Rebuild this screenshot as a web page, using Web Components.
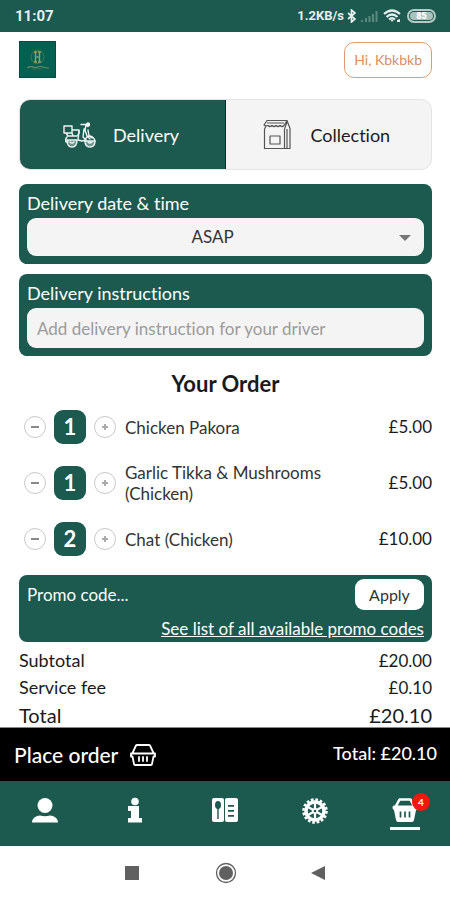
<!DOCTYPE html>
<html lang="en">
<head>
<meta charset="utf-8">
<meta name="viewport" content="width=device-width, initial-scale=1">
<title>Your Order</title>
<style>
  html, body { margin: 0; height: 100%; }
  body {
    --green: #1c594f;
    --panel: #f4f4f4;
    font: 17px/20px Lato, "Liberation Sans", sans-serif;
    font-variant-ligatures: none;
    color: #1a1a1a;
    background: #fff;
  }
</style>
</head>
<body>
<order-screen></order-screen>
<script>
const define = (name, html, setup) => {
  const tpl = document.createElement('template');
  tpl.innerHTML = '<style>*{box-sizing:border-box}button,input,select{font:inherit;font-variant-ligatures:none;color:inherit;margin:0;border:0;padding:0;background:none}svg{display:block}</style>' + html;
  customElements.define(name, class extends HTMLElement {
    constructor() {
      super();
      this.attachShadow({ mode: 'open' }).append(tpl.content.cloneNode(true));
    }
    connectedCallback() { if (setup) setup(this, this.shadowRoot); }
  });
};

define('status-bar', `
<style>
  :host { display: flex; align-items: center; justify-content: space-between; height: 32px; flex: none;
    padding: 0 14px 0 15px; background: var(--green); color: #e6f0ed; font-family: Roboto, sans-serif; font-weight: 700; font-size: 15px; }
  .right { display: flex; align-items: center; gap: 5px; font-size: 13px; }
  .speed { margin-right: -2px; }
  .bat { border: 2px solid #b5cbc6; border-radius: 8px; width: 29px; height: 14px; display: grid; place-items: center; padding: 1px; }
  .bat b { background: #a9c2bc; color: #fff; border-radius: 4px; font-size: 9px; line-height: 8px; width: 100%; text-align: center; }
</style>
<span>11:07</span>
<div class="right">
  <span class="speed">1.2KB/s</span>
  <svg width="9" height="14" viewBox="0 0 9 14" fill="none" stroke="#e6f0ed" stroke-width="1.700"><path d="M1 4l7 6-3.500 3V1L8 4 1 10"/></svg>
  <svg width="17" height="13" viewBox="0 0 17 13" fill="#5b877f"><path d="M0 10h2v2H0zM4 8h2v4H4zM7.500 6h2v6h-2zM11 4h2v8h-2zM14.500 1h2v11h-2z"/></svg>
  <svg width="19" height="14" viewBox="0 0 19 14" fill="none" stroke="#e6f0ed" stroke-width="2.200"><path d="M1 5Q9 -2 17 5M3.500 8Q9 3 14.500 8M6 10.500Q9 8 12 10.500"/><path d="M7.500 11h3L9 13zM14 11l3-1v3h-3z" fill="#e6f0ed" stroke="none"/></svg>
  <div class="bat"><b>85</b></div>
</div>`);

define('top-header', `
<style>
  :host { display: flex; align-items: center; justify-content: space-between; padding-top: 9px; }
  button { height: 36px; padding: 0 9px; border: 1px solid #dd9d6c; border-radius: 10px; color: #d98f58; font-size: 14px; }
</style>
<svg width="37" height="37" viewBox="0 0 37 37" role="img" aria-label="Restaurant logo">
  <rect width="37" height="37" fill="#0b4a40"/><rect x="1" y="1" width="35" height="35" fill="#046050"/>
  <g fill="none" stroke="#a39a67"><circle cx="18.500" cy="16" r="6.500" stroke-width=".6" opacity=".7"/><path d="M16.500 11v10M15 11h3M15 21h3M20.500 11v10M19 11h3M19 21h3M17.500 16h2" stroke-width="1.400"/><path d="M8 27q4-2 6-1t5 0 5 0 6 1" stroke-width="1.200" opacity=".7"/><path d="M13 28h11" stroke-width=".6" opacity=".5"/></g>
</svg>
<button type="button">Hi, Kbkbkb</button>`);

define('mode-switch', `
<style>
  :host { display: grid; grid-template-columns: 1fr 1fr; height: 71px; border-radius: 11px; overflow: hidden; border: 1px solid #e4e4e4; background: var(--panel); }
  button { display: flex; align-items: center; font-size: 18px; padding-left: 43px; gap: 17px; cursor: pointer; }
  button.on { background: var(--green); color: #fff; border-right: 1px solid #0c2a25; }
  button:not(.on) { padding-left: 37px; gap: 20px; }
</style>
<button type="button" class="on" aria-pressed="true">
  <svg width="33" height="26" viewBox="0 0 33 26" fill="none" stroke="#eef5f3" stroke-width="1.400" stroke-linejoin="round" stroke-linecap="round">
    <path d="M1 4h8v7H1zM9 8h7v3l-1 2M3 11l2 3h9M9 11l1 3M4 15q-2 2-1 5h2"/>
    <path d="M18 2.500h5l2 2M23 3l-1 5 2 6 3 3M25 8l1 6 3 2M16 9l-1 9 4 1 4-1-3-3 1-8"/>
    <path d="M22 19q1-5 5-5 4 1 5 5"/><circle cx="25" cy="2.500" r="1.500" fill="#fff"/>
    <path d="M4 18h10q0 7-5 7t-5-7zM22 19h10q0 6-5 6t-5-6z" fill="#fff" fill-opacity=".35"/>
    <path d="M7 20q2 2 4 0M25 20q2 2 4 0"/>
  </svg>Delivery
</button>
<button type="button" aria-pressed="false">
  <svg width="28" height="31" viewBox="0 0 28 31" fill="none" stroke="#555" stroke-width="1.200" stroke-linejoin="round">
    <path d="M4 1.500h20l-3 5q-2 2-4 0-2 2-4 0-2 2-4 0-2 2-4 0-2 1-4-.5zM1.500 10v19.500h20V10M3 7l-1.500 3M24 1.500l3 8v20h-5.500M21.500 10L24 3M24 10v19M4 4h17"/>
    <path d="M7 17h10v8H7z"/>
  </svg>Collection
</button>`);

define('field-card', `
<style>
  :host { display: block; background: var(--green); border-radius: 8px; padding: 8px; color: #fff; }
  label { display: block; font-size: 18px; line-height: 22px; margin-bottom: 4px; }
  .box { position: relative; }
  select, input { display: block; width: 100%; height: 38px; border-radius: 9px; background: var(--panel); }
  select { appearance: none; text-align-last: center; color: #333; padding-right: 26px; }
  input { height: 40px; padding: 0 10px; }
  input::placeholder { color: #9b9b9b; opacity: 1; }
  svg { position: absolute; right: 13px; top: 17px; pointer-events: none; }
</style>
<label for="f"></label><div class="box"></div>`, (el, root) => {
  root.querySelector('label').textContent = el.getAttribute('label');
  const hint = el.getAttribute('placeholder');
  root.querySelector('.box').innerHTML = hint
    ? '<input id="f" type="text">'
    : '<select id="f"><option>' + el.getAttribute('value') + '</option></select><svg width="12" height="6" viewBox="0 0 12 6" fill="#777"><path d="M0 0h12L6 6z"/></svg>';
  if (hint) root.getElementById('f').placeholder = hint;
});

define('order-row', `
<style>
  :host { display: grid; grid-template-columns: 22px 32px 22px 1fr auto; align-items: center; column-gap: 8px; min-height: 56px; padding-left: 5px; }
  button { width: 22px; height: 22px; border: 1px solid #c9c9c9; border-radius: 50%; display: grid; place-items: center; }
  output { height: 34px; border-radius: 9px; background: var(--green); color: #fff; font-size: 22px; line-height: 34px; text-align: center; font-weight: 700; }
  .name { padding: 0 30px 0 1px; line-height: 21px; color: #333; }
</style>
<button type="button" aria-label="Remove one"><svg width="8" height="8"><path d="M0 4h8" stroke="#888" stroke-width="2"/></svg></button>
<output></output>
<button type="button" aria-label="Add one"><svg width="8" height="8"><path d="M1 4h6M4 1v6" stroke="#aaa" stroke-width="2"/></svg></button>
<span class="name"><slot></slot></span><span class="price"></span>`, (el, root) => {
  root.querySelector('output').textContent = el.getAttribute('qty');
  root.querySelector('.price').textContent = el.getAttribute('price');
});

define('promo-card', `
<style>
  :host { display: block; background: var(--green); border-radius: 8px; padding: 4px 8px 3px; color: #fff; }
  .top { display: flex; align-items: center; gap: 8px; margin-bottom: 8px; }
  input { flex: 1; min-width: 0; height: 31px; }
  input::placeholder { color: #fff; opacity: 1; }
  button { height: 31px; width: 69px; border-radius: 9px; background: #fff; color: #333; font-size: 16px; }
  a { display: block; text-align: right; color: #fff; line-height: 21px; }
</style>
<div class="top"><input type="text" aria-label="Promo code" placeholder="Promo code..."><button type="button">Apply</button></div>
<a href="#promos">See list of all available promo codes</a>`);

define('sum-line', `
<style>
  :host { display: flex; justify-content: space-between; font-size: 18px; line-height: 27px; }
  ::slotted(span) { font-size: 17px; }
  :host([total]), :host([total]) ::slotted(span) { font-size: 20px; line-height: 29px; }
</style>
<slot></slot><slot name="value"></slot>`);

define('place-order-bar', `
<style>
  :host { display: flex; justify-content: space-between; align-items: center; flex: none; height: 54px; background: #000; color: #fff; border-top: 1px solid #888; padding: 0 13px 0 14px; }
  button { display: flex; align-items: center; gap: 12px; font-size: 21px; font-weight: 500; }
  .total { font-size: 18px; font-weight: 500; padding-bottom: 4px; }
</style>
<button type="button">Place order
  <svg width="26" height="22" viewBox="0 0 26 22" fill="none" stroke="#fff" stroke-width="1.800" stroke-linejoin="round" stroke-linecap="round"><path d="M2.500 9L6 1.500Q6.300 1 7 1h12q.7 0 1 .5L23.500 9M1 9.500h24v3h-1.500L22 20q-.2 1-1.200 1H5.200Q4.200 21 4 20L2.500 12.500H1zM9 13v4M13 13v4M17 13v4"/></svg>
</button>
<span class="total">Total: £20.10</span>`);

define('tab-bar', `
<style>
  :host { display: block; flex: none; background: var(--green); }
  nav { display: grid; grid-template-columns: repeat(5, 1fr); height: 65px; }
  a { display: flex; justify-content: center; padding-top: 16px; color: #fff; }
  .on span { position: relative; display: flex; flex-direction: column; align-items: center; height: 33px; width: 30px; border-bottom: 3px solid #fff; }
  .on b { position: absolute; left: 22px; top: -4px; width: 18px; height: 18px; border-radius: 50%; background: #f3170d; font-size: 10px; line-height: 18px; text-align: center; }
</style>
<nav>
  <a href="#account" aria-label="Account"><svg width="26" height="27" viewBox="0 0 26 27" fill="#fff"><circle cx="13" cy="8.500" r="7.500"/><path d="M0 25.500c0-4 4-7 8-7 3 1 7 1 10 0 4 0 8 3 8 7z"/></svg></a>
  <a href="#info" aria-label="Information"><svg width="16" height="27" viewBox="0 0 16 27" fill="#fff"><circle cx="8" cy="4.500" r="3.800"/><path d="M1 9h11v12h3v4.500H1V21h3v-7H1z"/></svg></a>
  <a href="#menu" aria-label="Menu"><svg width="26" height="27" viewBox="0 0 26 27"><rect x="0" y="1" width="12" height="24" rx="2" fill="#fff"/><rect x="13" y="1" width="13" height="24" rx="2" fill="#fff"/><g fill="#1c594f"><ellipse cx="6" cy="8" rx="3" ry="4"/><path d="M5.300 11h1.400v11H5.300zM16 8h6v1.800h-6zM16 13h6v1.800h-6zM16 18h6v1.800h-6z"/></g></svg></a>
  <a href="#settings" aria-label="Settings"><svg width="26" height="28" viewBox="-13 -14 26 28" fill="none" stroke="#fff"><circle r="11.500" stroke-width="2.500" stroke-dasharray="2.700 1.816"/><circle r="9" stroke-width="3.500"/><path d="M0-9V9M-7.800-4.500L7.800 4.500M-7.800 4.500L7.800-4.500" stroke-width="2.200"/><circle r="3" fill="#fff" stroke="none"/><circle r="1.300" fill="#1c594f" stroke="none"/></svg></a>
  <a class="on" href="#basket" aria-label="Basket, 4 items" aria-current="page"><span><svg width="26" height="27" viewBox="0 0 26 27" fill="#fff"><path d="M3.500 10L7.500 2.500h11l4 7.500" fill="none" stroke="#fff" stroke-width="2.600" stroke-linejoin="round"/><path d="M2 8.500h22q1.500 0 1.500 2T24 13l-2 10q-.4 2-2 2H6q-1.600 0-2-2L2 13Q.5 12.500.5 10.500T2 8.500z"/><path d="M8.500 14.500v6M13 14.500v6M17.500 14.500v6" stroke="#1c594f" stroke-width="1.700"/></svg><b>4</b></span></a>
</nav>`);

define('system-keys', `
<style>
  :host { display: flex; flex: none; height: 54px; align-items: center; justify-content: center; gap: 73px; background: #fff; }
  button { display: grid; place-items: center; width: 20px; height: 22px; }
</style>
<button type="button" aria-label="Recent apps"><svg width="14" height="14"><path d="M0 0h14v14H0z" fill="#606060"/></svg></button>
<button type="button" aria-label="Home"><svg width="22" height="22" viewBox="-11 -11 22 22"><circle r="9.500" fill="none" stroke="#606060" stroke-width="1.300"/><circle r="7" fill="#606060"/></svg></button>
<button type="button" aria-label="Back"><svg width="14" height="16" viewBox="0 0 14 16"><path d="M14 1v14L0 8z" fill="#606060"/></svg></button>`);

define('order-screen', `
<style>
  :host { display: flex; flex-direction: column; height: 100vh; }
  main { flex: 1; min-height: 0; overflow: hidden; padding: 0 18px 0 19px; }
  mode-switch { margin: 21px 0 14px; }
  field-card + field-card { margin-top: 10px; }
  h1 { margin: 15px 0 3px; font-size: 22px; line-height: 25px; font-weight: 700; text-align: center; }
  promo-card { margin: 8px 0 5px; }
</style>
<status-bar></status-bar>
<main>
  <top-header></top-header>
  <mode-switch></mode-switch>
  <field-card label="Delivery date &amp; time" value="ASAP"></field-card>
  <field-card label="Delivery instructions" placeholder="Add delivery instruction for your driver"></field-card>
  <h1>Your Order</h1>
  <order-row qty="1" price="£5.00">Chicken Pakora</order-row>
  <order-row qty="1" price="£5.00">Garlic Tikka &amp; Mushrooms (Chicken)</order-row>
  <order-row qty="2" price="£10.00">Chat (Chicken)</order-row>
  <promo-card></promo-card>
  <sum-line>Subtotal<span slot="value">£20.00</span></sum-line>
  <sum-line>Service fee<span slot="value">£0.10</span></sum-line>
  <sum-line total>Total<span slot="value">£20.10</span></sum-line>
</main>
<place-order-bar></place-order-bar>
<tab-bar></tab-bar>
<system-keys></system-keys>`);
</script>
</body>
</html>
